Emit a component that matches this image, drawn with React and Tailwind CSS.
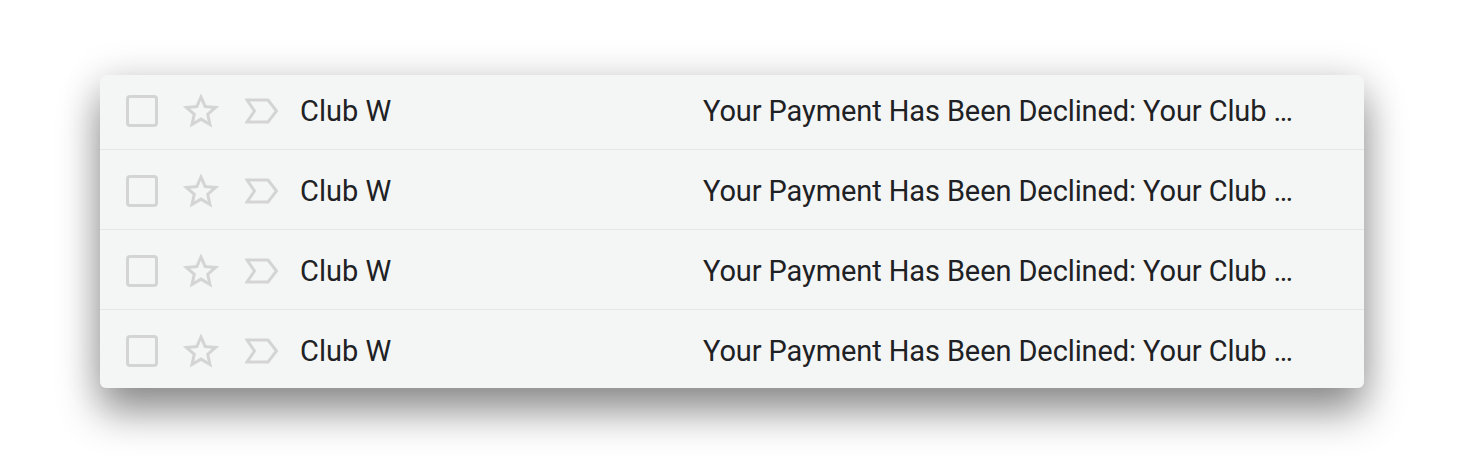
import React from 'react';

const Star = () => (
  <svg width="36" height="34" viewBox="0 0 36 34" className="shrink-0">
    <polygon
      points="18,3 22.2,12.6 32.5,13.5 24.7,20.3 27,30.5 18,25.1 9,30.5 11.3,20.3 3.5,13.5 13.8,12.6"
      fill="none"
      stroke="#d4d4d4"
      strokeWidth="3"
      strokeLinejoin="miter"
    />
  </svg>
);

const Tag = () => (
  <svg width="34" height="26" viewBox="0 0 34 26" className="shrink-0">
    <polygon
      points="2,2 23,2 31.5,13 23,24 2,24 9.5,13"
      fill="none"
      stroke="#d4d4d4"
      strokeWidth="3"
      strokeLinejoin="miter"
    />
  </svg>
);

const Row = () => (
  <div className="flex items-center h-[80px] pt-[2px] pl-[26px] border-b border-[#e2e7e9]">
    <div className="w-[32px] h-[32px] border-[3px] border-[#d4d4d4] rounded-[4px] shrink-0" />
    <div className="ml-[25px]">
      <Star />
    </div>
    <div className="ml-[26px]">
      <Tag />
    </div>
    <div className="ml-[21px] w-[403px] pt-[2px] text-[29px] leading-none text-[#202124]">Club W</div>
    <div className="pt-[2px] text-[29px] leading-none text-[#202124] tracking-[-0.1px]">
      Your Payment Has Been Declined: Your Club …
    </div>
  </div>
);

const App = () => {
  return (
    <div className="w-[1464px] h-[464px] bg-white pt-[75px] pl-[100px] font-['Roboto',sans-serif]">
      <div className="w-[1264px] h-[313px] bg-[#f4f6f5] rounded-[6px] overflow-hidden shadow-[0_24px_40px_rgba(0,0,0,0.42),0_0_40px_rgba(0,0,0,0.12)]">
        <div className="-mt-[5px]">
          <Row />
          <Row />
          <Row />
          <Row />
        </div>
      </div>
    </div>
  );
};

export default App;
